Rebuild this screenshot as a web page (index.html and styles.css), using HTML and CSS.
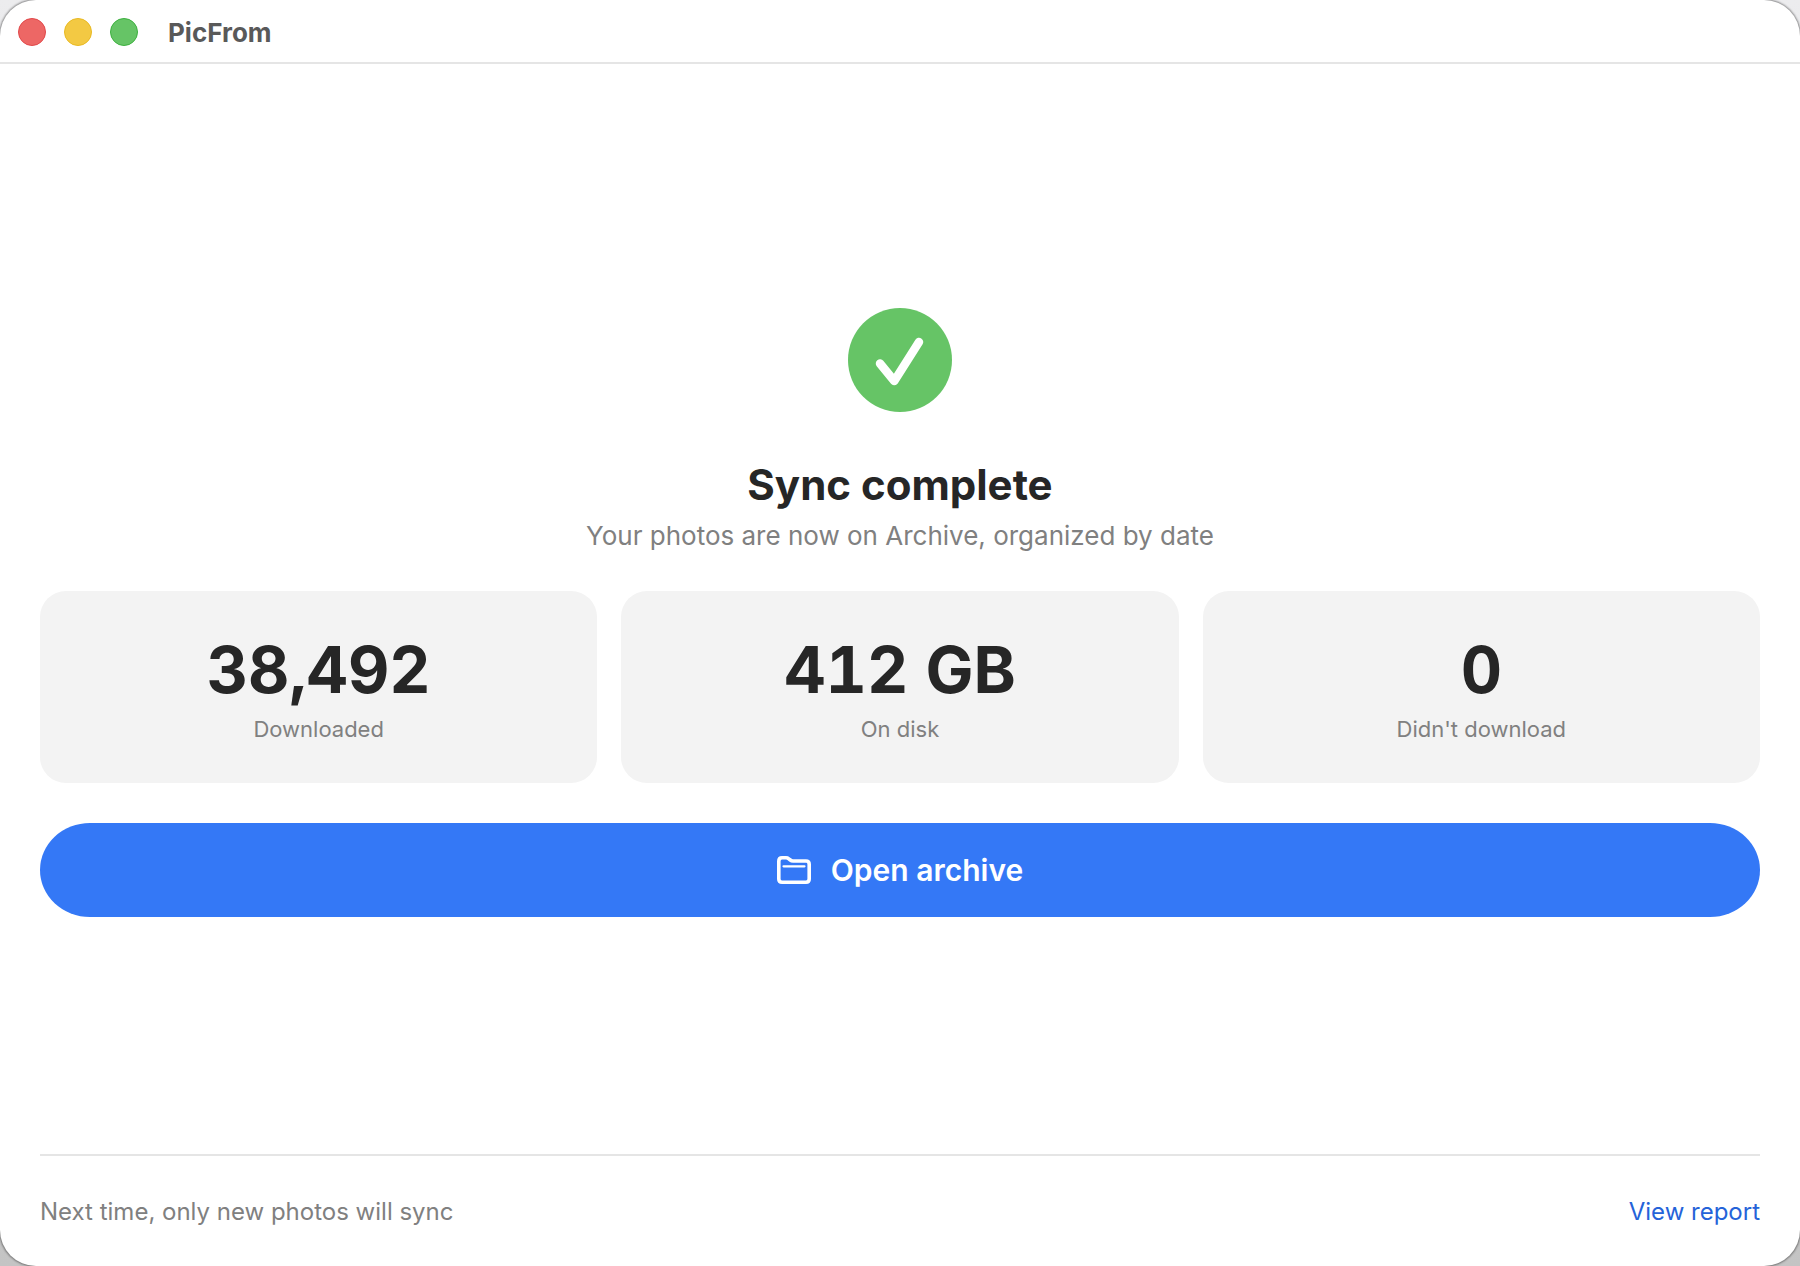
FILE: index.html
```html
<!DOCTYPE html>
<html lang="en">

<head>
    <meta charset="UTF-8">
    <meta name="viewport" content="width=device-width, initial-scale=1.0">
    <title>PicFrom</title>
    <link rel="stylesheet" href="styles.css">
</head>

<body>
    <div class="window">
        <header class="titlebar">
            <div class="lights">
                <button class="light close" type="button" aria-label="Close"></button>
                <button class="light minimize" type="button" aria-label="Minimize"></button>
                <button class="light zoom" type="button" aria-label="Zoom"></button>
            </div>
            <span class="app-name">PicFrom</span>
        </header>

        <main class="content">
            <svg class="check" viewBox="0 0 104 104" aria-hidden="true">
                <circle cx="52" cy="52" r="52" fill="#66c466" />
                <path d="M32 55.500L46.300 73L71 34" fill="none" stroke="#fff" stroke-width="8.500"
                    stroke-linecap="round" stroke-linejoin="round" />
            </svg>
            <h1 class="heading">Sync complete</h1>
            <p class="subtitle">Your photos are now on Archive, organized by date</p>

            <div class="stats">
                <div class="card">
                    <div class="value">38,492</div>
                    <div class="label">Downloaded</div>
                </div>
                <div class="card">
                    <div class="value">412 GB</div>
                    <div class="label">On disk</div>
                </div>
                <div class="card">
                    <div class="value">0</div>
                    <div class="label">Didn't download</div>
                </div>
            </div>

            <button class="open" type="button">
                <svg class="folder" viewBox="0 0 34 28" aria-hidden="true">
                    <path d="M1.800 5.200V23Q1.800 26.200 5 26.200H29Q32.200 26.200 32.200 23V8.200Q32.200 5 29 5H16Q14.500 5 13.300 4L11.800 2.800Q10.600 1.800 9 1.800H5Q1.800 1.800 1.800 5.200Z"
                        fill="none" stroke="#fff" stroke-width="3.600" />
                    <path d="M6.500 10.300H27.500" stroke="#fff" stroke-width="2.200" stroke-linecap="round" />
                </svg>
                Open archive
            </button>
        </main>

        <footer class="footer">
            <span>Next time, only new photos will sync</span>
            <a class="report" href="#report">View report</a>
        </footer>
    </div>
</body>

</html>
```
FILE: styles.css
```css
* {
    margin: 0;
    padding: 0;
    box-sizing: border-box;
}

body {
    min-height: 100vh;
    display: flex;
    background: linear-gradient(#ececee, #c4c4c4);
    font-family: Inter, "Liberation Sans", sans-serif;
    color: #262626;
}

.window {
    flex: 1;
    display: flex;
    flex-direction: column;
    background-color: #ffffff;
    border-radius: 36px;
    box-shadow: 0 0 2px 1px rgba(0, 0, 0, 0.4);
    overflow: hidden;
}

.titlebar {
    display: flex;
    align-items: center;
    gap: 30px;
    height: 64px;
    padding: 2px 18px 0;
    border-bottom: 2px solid #e5e5e5;
}

.lights {
    display: flex;
    gap: 18px;
}

.light {
    width: 28px;
    height: 28px;
    border-radius: 50%;
    border: 1px solid;
}

.close {
    background-color: #ed6765;
    border-color: #e1484a;
}

.minimize {
    background-color: #f3c943;
    border-color: #e8b923;
}

.zoom {
    background-color: #66c466;
    border-color: #3db03f;
}

.app-name {
    font-size: 26px;
    font-weight: 700;
    color: #595959;
}

.content {
    flex: 1;
    display: flex;
    flex-direction: column;
    justify-content: center;
    align-items: center;
    padding: 6px 40px 0;
}

.check {
    width: 104px;
    height: 104px;
    margin-bottom: 46px;
}

.heading {
    font-size: 42px;
    line-height: 54px;
    font-weight: 700;
}

.subtitle {
    margin-top: 8px;
    font-size: 26px;
    line-height: 32px;
    color: #808080;
}

.stats {
    display: grid;
    grid-template-columns: repeat(3, 1fr);
    gap: 24px;
    width: 100%;
    margin: 39px 0 40px;
}

.card {
    padding: 40px;
    border-radius: 26px;
    background-color: #f3f3f3;
    text-align: center;
}

.value {
    font-size: 64px;
    line-height: 78px;
    font-weight: 700;
    font-variant-numeric: tabular-nums;
}

.label {
    margin-top: 6px;
    font-size: 22px;
    line-height: 28px;
    color: #808080;
}

.open {
    display: flex;
    justify-content: center;
    align-items: center;
    gap: 20px;
    width: 100%;
    height: 94px;
    border: none;
    border-radius: 50px / 47px;
    background-color: #3478f6;
    color: #ffffff;
    font-family: inherit;
    font-size: 30px;
    font-weight: 600;
    cursor: pointer;
}

.folder {
    width: 34px;
    height: 28px;
}

.footer {
    display: flex;
    justify-content: space-between;
    align-items: center;
    height: 112px;
    margin: 0 40px;
    border-top: 2px solid #e5e5e5;
    font-size: 24px;
    color: #808080;
}

.report {
    color: #2563d9;
    text-decoration: none;
}

.report:hover {
    text-decoration: underline;
}
```
